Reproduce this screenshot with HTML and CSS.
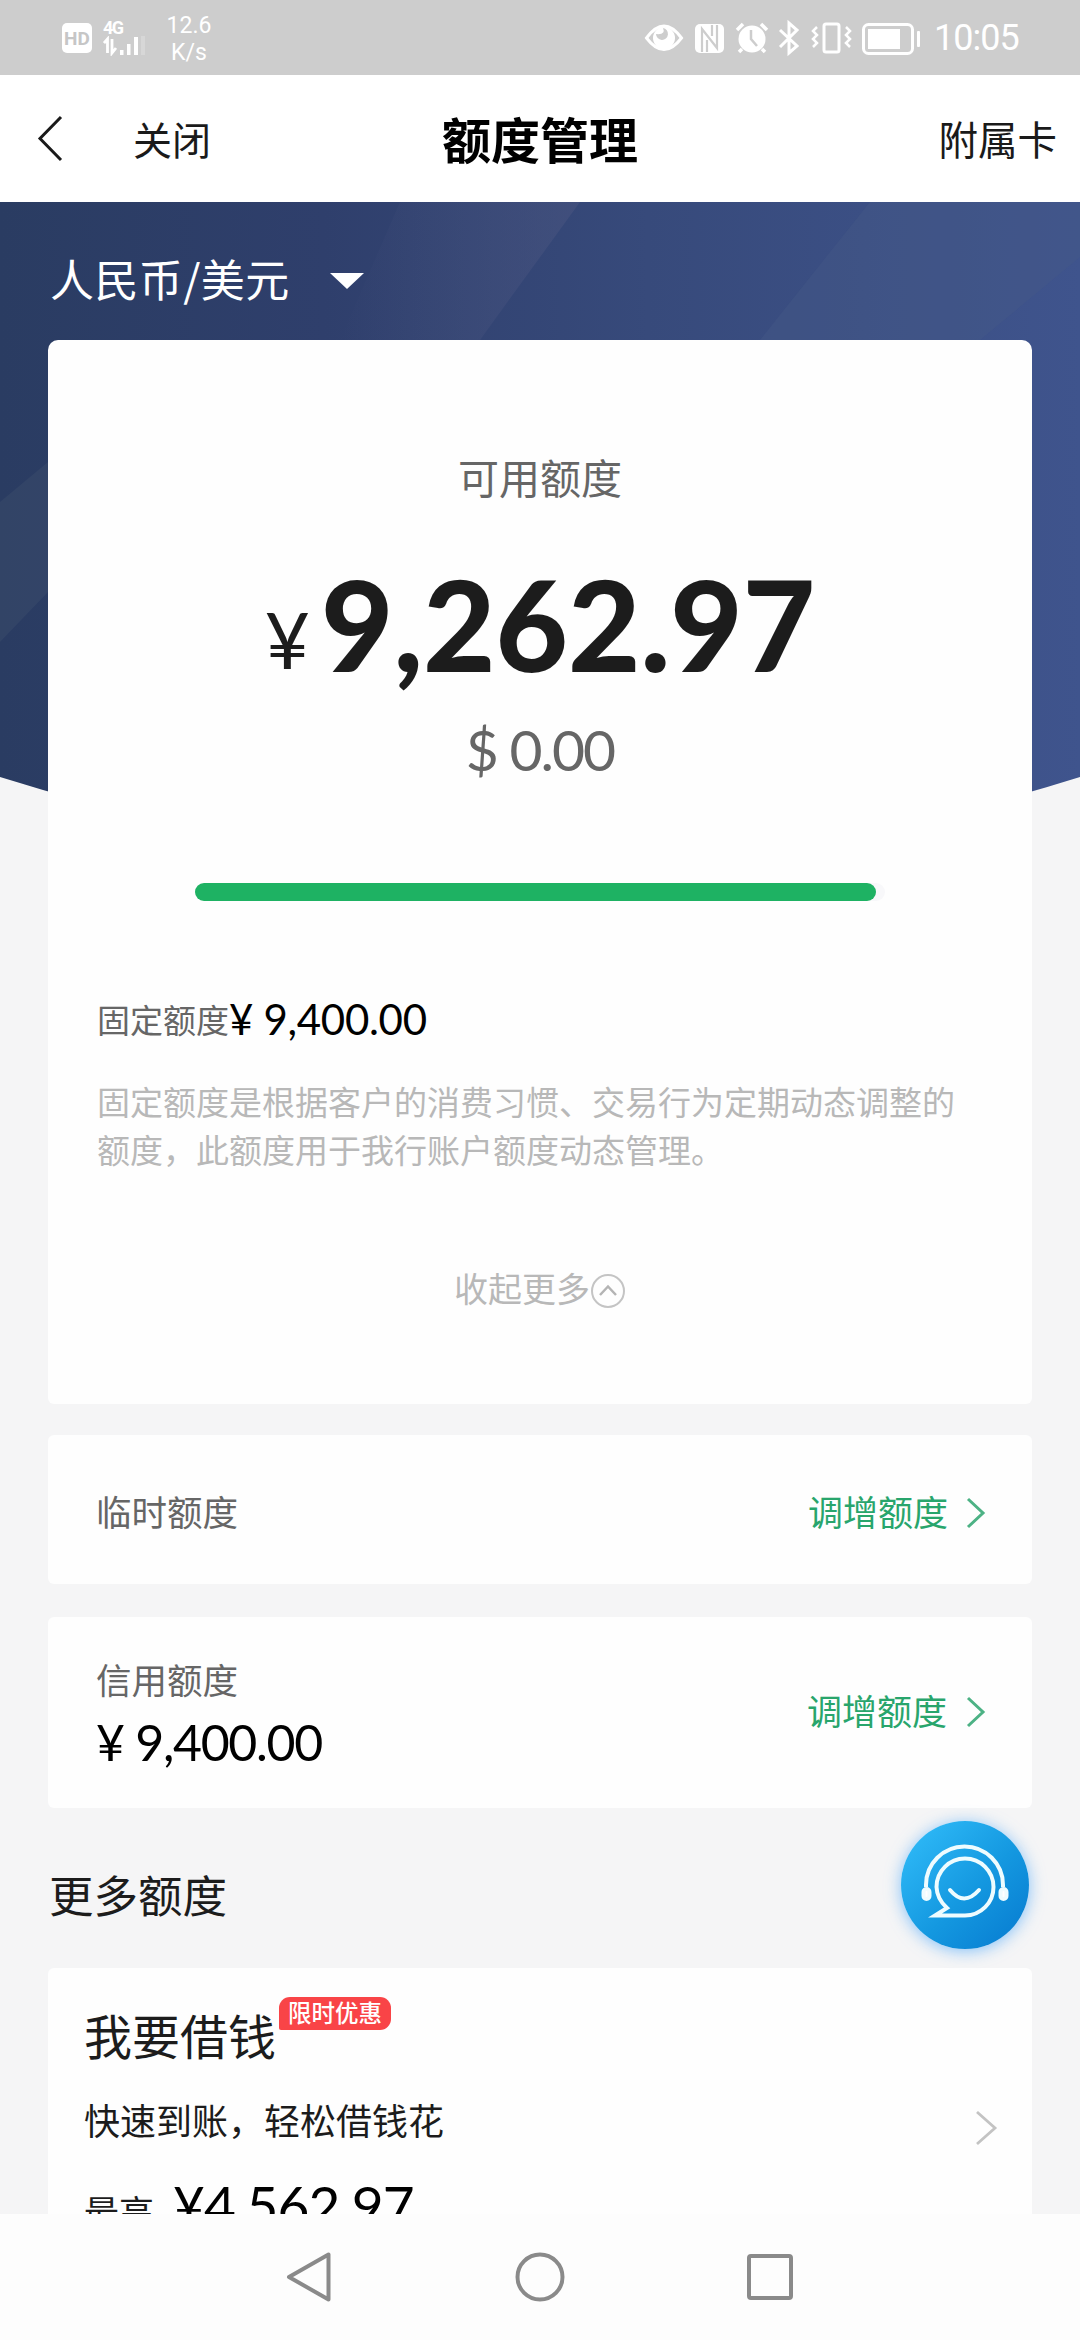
FILE: index.html
```html
<!DOCTYPE html>
<html lang="zh-CN">
<head>
<meta charset="utf-8">
<title>额度管理</title>
<link rel="stylesheet" href="styles.css">
</head>
<body>
<div class="screen">
  <div class="status">
    <span class="hd">HD</span>
    <div class="signal">
      <span class="net">4G</span>
      <svg class="bars" width="48" height="20" viewBox="0 0 48 20">
        <path d="M1 7l3.500-4v14M9 3v14l4-5" fill="none" stroke="#fff" stroke-width="2.800"/>
        <path d="M17 14h3.500v5H17zM24 8h3.500v11H24zM31 1h4v18h-4z" fill="#fff"/>
        <path d="M38 0h4v19h-4z" fill="#d7d7d7"/>
      </svg>
    </div>
    <div class="speed"><span>12.6</span><span>K/s</span></div>
    <svg class="sysicons" width="280" height="40" viewBox="0 0 280 40">
      <g fill="none" stroke="#fff" stroke-width="3">
        <path d="M3.500 20Q21-4 38.500 20Q21 43 3.500 20z"/>
        <path d="M137 12l17 16-8 7V5l8 7-17 17"/>
        <rect x="181" y="6" width="15" height="28" rx="2"/>
        <path d="M174 9l-4 4 4 4-4 4 4 4-4 4M203 9l4 4-4 4 4 4-4 4 4 4" stroke-width="2.500"/>
        <rect x="220.500" y="6.500" width="49" height="29" rx="5"/>
        <path d="M94 12l6-6M118 6l6 6M99 31l-3 3M119 31l3 3" stroke-width="3.500"/>
      </g>
      <circle cx="21" cy="20" r="11" fill="#fff"/>
      <path d="M13 16a6 6 0 1 0 7-6q3 7-7 6z" fill="#cdcdcd"/>
      <rect x="52" y="6" width="29" height="29" rx="5" fill="#fff"/>
      <path d="M59 34V11l15 19V7M64 34V22M69 18V7" fill="none" stroke="#cdcdcd" stroke-width="2.200"/>
      <circle cx="109" cy="21" r="13.500" fill="#fff"/>
      <path d="M108 12v9l6 7" fill="none" stroke="#cdcdcd" stroke-width="2.500"/>
      <rect x="225" y="11" width="32" height="20" fill="#fff"/>
      <rect x="274" y="13" width="3" height="16" rx="1" fill="#fff"/>
    </svg>
    <span class="clock">10:05</span>
  </div>

  <div class="header">
    <svg class="back" width="28" height="48" viewBox="0 0 28 48"><path d="M25 2L4 23.500 25 45" fill="none" stroke="#1a1a1a" stroke-width="3"/></svg>
    <span class="close">关闭</span>
    <h1>额度管理</h1>
    <span class="sub">附属卡</span>
  </div>

  <div class="content">
    <svg class="hero" width="1080" height="620" viewBox="0 0 1080 620">
      <defs>
        <linearGradient id="sky" x1="0" y1="0" x2="1" y2="0">
          <stop offset="0" stop-color="#2a3c62"/><stop offset=".3" stop-color="#2f3f6c"/>
          <stop offset=".6" stop-color="#374a7b"/><stop offset="1" stop-color="#3f548d"/>
        </linearGradient>
        <linearGradient id="ray" x1="0" y1="0" x2="1" y2="0">
          <stop offset="0" stop-color="#4a5580" stop-opacity="0"/><stop offset="1" stop-color="#4a5580" stop-opacity=".55"/>
        </linearGradient>
      </defs>
      <path d="M0 0H1080V575Q540 745 0 575z" fill="url(#sky)"/>
      <path d="M400 0H580L480 138H340z" fill="url(#ray)"/>
      <path d="M870 0H1080V55L980 138H760z" fill="#465b86" opacity=".4"/>
      <path d="M0 300L48 260V390L0 440z" fill="#41536f" opacity=".35"/>
    </svg>

    <div class="currency">
      <span>人民币/美元</span>
      <svg width="34" height="16" viewBox="0 0 34 16"><path d="M0 0H34L17 16z" fill="#fff"/></svg>
    </div>

    <div class="card limit">
      <div class="limit-label">可用额度</div>
      <div class="amount"><span class="yen">¥</span><span class="big">9,262.97</span></div>
      <div class="dollar">$ 0.00</div>
      <div class="track"><div class="fill"></div></div>
      <div class="fixed"><span class="fixed-label">固定额度</span><span class="fixed-value">¥ 9,400.00</span></div>
      <p class="desc">固定额度是根据客户的消费习惯、交易行为定期动态调整的额度，此额度用于我行账户额度动态管理。</p>
      <div class="more"><span>收起更多</span>
        <svg width="36" height="36" viewBox="0 0 36 36" fill="none" stroke="#c4c4c4"><circle cx="18" cy="18" r="16" stroke-width="2"/><path d="M10 22l8-8.500 8 8.500" stroke="#b4b4b4" stroke-width="2.500"/></svg>
      </div>
    </div>

    <div class="card row temp">
      <span class="name">临时额度</span>
      <span class="action">调增额度</span>
      <svg width="20" height="32" viewBox="0 0 20 32"><path d="M2 2L17 16 2 30" fill="none" stroke="#4db285" stroke-width="3"/></svg>
    </div>

    <div class="card row credit">
      <div class="info"><span class="name">信用额度</span><span class="value">¥ 9,400.00</span></div>
      <span class="action">调增额度</span>
      <svg width="20" height="32" viewBox="0 0 20 32"><path d="M2 2L17 16 2 30" fill="none" stroke="#4db285" stroke-width="3"/></svg>
    </div>

    <h2>更多额度</h2>

    <div class="card loan">
      <div class="loan-text">
        <div class="loan-title"><span>我要借钱</span><span class="badge">限时优惠</span></div>
        <div class="loan-sub">快速到账，轻松借钱花</div>
        <div class="loan-max"><span>最高</span><span class="loan-value">¥4,562.97</span></div>
      </div>
      <svg class="go" width="24" height="36" viewBox="0 0 24 36"><path d="M2 2L20 18 2 34" fill="none" stroke="#c3c3c3" stroke-width="2.800"/></svg>
    </div>

    <div class="service">
      <svg width="128" height="128" viewBox="0 0 128 128" fill="none" stroke="#eefcff" stroke-width="4">
        <path d="M25 66V64a38.500 38.500 0 0 1 77 0v2"/>
        <path d="M34 94.500H64A28.500 28.500 0 1 0 35.500 66Q36 78 46 87z"/>
        <path d="M49 69Q63 86 78 69" stroke-linecap="round"/>
        <rect x="22.500" y="68" width="6" height="10" rx="3" fill="#fff"/>
        <rect x="99.500" y="68" width="6" height="10" rx="3" fill="#fff"/>
      </svg>
    </div>
  </div>

  <div class="nav">
    <svg width="50" height="54" viewBox="0 0 50 54"><path d="M43.500 4.500V49.500L4 27z" fill="none" stroke="#8a8a8a" stroke-width="4" stroke-linejoin="round"/></svg>
    <svg width="54" height="54" viewBox="0 0 54 54"><circle cx="27" cy="27" r="22.500" fill="none" stroke="#8a8a8a" stroke-width="4"/></svg>
    <svg width="50" height="54" viewBox="0 0 50 54"><rect x="4" y="6" width="42" height="42" rx="2" fill="none" stroke="#8a8a8a" stroke-width="4"/></svg>
  </div>
</div>
</body>
</html>
```
FILE: styles.css
```css
* { box-sizing: border-box; }
body { margin: 0; font-family: "Noto Sans CJK SC", sans-serif; }
h1, h2, p { margin: 0; }
svg { display: block; flex: none; }
span { white-space: nowrap; }

.screen { width: 1080px; height: 2340px; display: flex; flex-direction: column; overflow: hidden; background: #f5f5f6; }

.status { height: 75px; flex: none; display: flex; align-items: center; padding: 0 60px 0 62px; background: #cdcdcd; color: #fff; font-family: Roboto, sans-serif; }
.hd { width: 30px; height: 30px; line-height: 31px; border-radius: 5px; background: #fff; color: #c6c6c6; font-size: 19px; font-weight: 700; text-align: center; }
.signal { margin-left: 11px; width: 48px; height: 36px; display: flex; flex-direction: column; justify-content: space-between; }
.net { font-size: 18px; line-height: 16px; font-weight: 700; letter-spacing: -1.500px; }
.speed { width: 60px; margin-left: 8px; display: flex; flex-direction: column; align-items: center; font-size: 23px; line-height: 27px; padding-top: 3px; }
.sysicons { margin-left: 424px; }
.clock { margin-left: 11px; font-size: 36px; letter-spacing: -1px; }

.header { height: 127px; flex: none; display: grid; grid-template-columns: 340px 400px 340px; align-items: center; background: #fff; }
.back { grid-area: 1 / 1; margin-left: 36px; }
.close { grid-area: 1 / 1; margin: 0 0 2px 133px; font-size: 39px; color: #1a1a1a; }
.header h1 { margin-bottom: 2px; font-size: 49px; line-height: 72px; text-align: center; font-weight: 700; color: #000; }
.sub { justify-self: end; margin: 0 23px 2px 0; font-size: 39.500px; color: #1a1a1a; }

.content { position: relative; height: 2012px; flex: none; overflow: hidden; padding: 0 48px; }
.hero { position: absolute; left: 0; top: 0; }
.currency { position: relative; height: 138px; display: flex; align-items: center; gap: 40px; padding: 14px 0 0 2px; font-size: 44px; line-height: 64px; letter-spacing: .4px; color: #fff; }
.currency span { margin-bottom: 1px; }
.currency svg { margin-top: 6px; }

.card { position: relative; background: #fefefe; border-radius: 6px; }
.limit { height: 1064px; padding: 107px 49px 0; border-radius: 10px 10px 6px 6px; }
.limit-label { height: 58px; line-height: 58px; text-align: center; font-size: 41px; color: #666; }
.amount { margin-top: 59px; height: 120px; display: flex; justify-content: center; color: #1c1c1c; }
.yen { font: 78px/151px Lato, sans-serif; margin-right: 11px; }
.big { font: 900 125px/120px Lato, sans-serif; }
.dollar { margin-top: 36px; font: 57px/58px Lato, sans-serif; letter-spacing: -2px; text-align: center; color: #666; }
.track { width: 690px; height: 18px; margin: 105px auto 0; border-radius: 9px; background: #f8f8fa; }
.fill { width: 681px; height: 18px; border-radius: 9px; background: #1eb263; }
.fixed { height: 52px; margin-top: 92px; display: flex; align-items: flex-start; }
.fixed-label { font-size: 33px; line-height: 53px; color: #666; }
.fixed-value { font: 42px/52px Lato, sans-serif; letter-spacing: -.3px; color: #000; }
.desc { margin-top: 32px; width: 870px; font-size: 33px; line-height: 48px; color: #b8b8b8; }
.more { margin-top: 92px; height: 48px; display: flex; align-items: center; justify-content: center; font-size: 34px; line-height: 46px; color: #b8b8b8; }
.more span { margin-bottom: 2px; }
.more svg { margin-top: 3px; }

.row { display: flex; align-items: center; padding: 0 46px 0 48px; }
.temp { height: 149px; margin-top: 31px; padding-top: 2px; }
.temp svg { margin-top: 4px; }
.credit { height: 191px; margin-top: 33px; padding-bottom: 5px; }
.credit .action { margin: 0 19px 2px 0; }
.credit svg { margin-top: 3px; }
.name { flex: 1; font-size: 35.500px; line-height: 52px; color: #666; }
.info { flex: 1; display: flex; flex-direction: column; }
.value { margin-top: 7px; margin-bottom: -4px; font: 50px/60px Lato, sans-serif; letter-spacing: -1.300px; color: #000; }
.action { font-size: 35px; margin-right: 18px; color: #28a56c; }

h2 { margin-top: 53px; height: 66px; line-height: 66px; padding-left: 1px; font-size: 44.500px; font-weight: 400; color: #1c1c1c; }

.loan { margin-top: 41px; height: 300px; padding: 34px 33px 0 36px; display: flex; }
.loan-text { flex: 1; }
.loan-title { display: flex; font-size: 48px; line-height: 64px; color: #1c1c1c; }
.badge { margin: -5px 0 0 3px; width: 112px; height: 33px; border-radius: 11px 11px 11px 2px; background: #f94447; color: #fff; font-size: 23.500px; line-height: 30px; text-align: center; font-weight: 500; }
.loan-sub { margin-top: 26px; font-size: 36px; line-height: 54px; color: #1c1c1c; }
.loan-max { margin-top: 19px; display: flex; align-items: baseline; gap: 19px; font-size: 35px; line-height: 80px; color: #1c1c1c; }
.loan-value { font: 55px/80px Lato, sans-serif; letter-spacing: -.900px; color: #000; }
.go { margin-top: 108px; }

.service { position: absolute; left: 901px; top: 1619px; width: 128px; height: 128px; border-radius: 50%; background: linear-gradient(135deg, #33bffb, #1498e0 55%, #0679cf); box-shadow: 0 2px 16px rgba(70, 165, 250, .65); }

.nav { height: 126px; flex: none; display: flex; justify-content: space-between; align-items: center; padding: 0 285px 0 285px; background: #fdfdfd; }
```
